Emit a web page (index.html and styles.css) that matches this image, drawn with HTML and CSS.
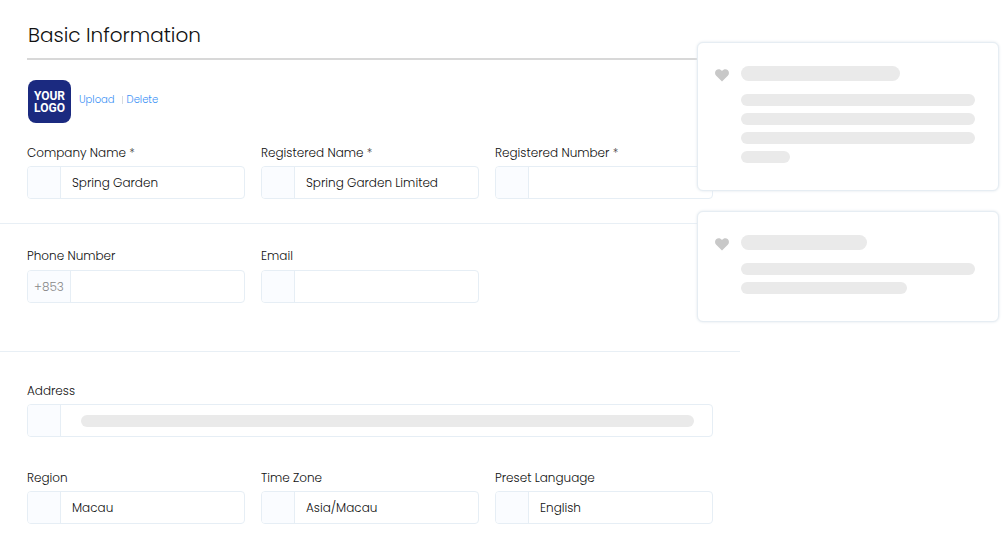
FILE: index.html
```html
<!DOCTYPE html>
<html lang="en">
<head>
    <meta charset="utf-8">
    <title>Basic Information</title>
    <link rel="stylesheet" href="styles.css">
</head>
<body>
<div class="page">
    <form class="main">
        <section class="section">
            <h1>Basic Information</h1>
            <div class="logo-row">
                <div class="logo"><span>YOUR</span><span>LOGO</span></div>
                <div class="logo-links">
                    <a href="#">Upload</a>
                    <span class="sep"></span>
                    <a href="#">Delete</a>
                </div>
            </div>
            <div class="fields">
                <div class="field">
                    <label for="company">Company Name <span class="req">*</span></label>
                    <div class="control"><span class="prefix"></span><input type="text" id="company" value="Spring Garden"></div>
                </div>
                <div class="field">
                    <label for="regname">Registered Name <span class="req">*</span></label>
                    <div class="control"><span class="prefix"></span><input type="text" id="regname" value="Spring Garden Limited"></div>
                </div>
                <div class="field">
                    <label for="regnumber">Registered Number <span class="req">*</span></label>
                    <div class="control"><span class="prefix"></span><input type="text" id="regnumber"></div>
                </div>
            </div>
        </section>
        <section class="section contact">
            <div class="fields">
                <div class="field">
                    <label for="phone">Phone Number</label>
                    <div class="control"><span class="prefix code">+853</span><input type="tel" id="phone"></div>
                </div>
                <div class="field">
                    <label for="email">Email</label>
                    <div class="control"><span class="prefix"></span><input type="email" id="email"></div>
                </div>
            </div>
        </section>
        <section class="section location">
            <div class="fields">
                <div class="field full">
                    <label for="address">Address</label>
                    <div class="control">
                        <span class="prefix"></span>
                        <input type="text" id="address">
                        <span class="bar address-bar"></span>
                    </div>
                </div>
                <div class="field">
                    <label for="region">Region</label>
                    <div class="control"><span class="prefix"></span><input type="text" id="region" value="Macau"></div>
                </div>
                <div class="field">
                    <label for="timezone">Time Zone</label>
                    <div class="control"><span class="prefix"></span><input type="text" id="timezone" value="Asia/Macau"></div>
                </div>
                <div class="field">
                    <label for="language">Preset Language</label>
                    <div class="control"><span class="prefix"></span><input type="text" id="language" value="English"></div>
                </div>
            </div>
        </section>
    </form>
    <aside class="cards">
        <div class="card">
            <svg class="heart" viewBox="0 0 14 13"><path d="M7 12.6 1.2 6.8C-.4 5.1-.3 2.6 1.1 1.3 2.7-.2 5.4-.1 7 2 8.6-.1 11.3-.2 12.9 1.3 14.3 2.6 14.4 5.1 12.8 6.8Z"/></svg>
            <div class="lines">
                <div class="bar title w68"></div>
                <div class="bar"></div>
                <div class="bar"></div>
                <div class="bar"></div>
                <div class="bar w21"></div>
            </div>
        </div>
        <div class="card">
            <svg class="heart" viewBox="0 0 14 13"><path d="M7 12.6 1.2 6.8C-.4 5.1-.3 2.6 1.1 1.3 2.7-.2 5.4-.1 7 2 8.6-.1 11.3-.2 12.9 1.3 14.3 2.6 14.4 5.1 12.8 6.8Z"/></svg>
            <div class="lines">
                <div class="bar title w54"></div>
                <div class="bar"></div>
                <div class="bar w71"></div>
            </div>
        </div>
    </aside>
</div>
</body>
</html>
```
FILE: styles.css
```css
* {
    box-sizing: border-box;
}

body {
    margin: 0;
    background: #fff;
    color: #111;
    font-family: Poppins, Inter, "Open Sans", sans-serif;
    font-size: 12px;
    font-weight: 300;
    line-height: 20px;
}

.page {
    position: relative;
}

.main {
    margin-right: 262px;
}

.section {
    padding: 0 27px 24px;
}

.section.contact {
    border-top: 1px solid #e8eff5;
    padding-top: 22px;
    padding-bottom: 48px;
}

.section.contact label {
    margin-bottom: 4px;
}

.section.location {
    border-top: 1px solid #e8eff5;
    padding-top: 29px;
}

h1 {
    margin: 0 0 20px;
    padding: 21px 0 9px 1px;
    border-bottom: 2px solid #d8d8d8;
    font-size: 20px;
    font-weight: 300;
    line-height: 28px;
}

.logo-row {
    display: flex;
    align-items: center;
    margin-bottom: 20px;
    padding-left: 1px;
}

.logo {
    display: flex;
    flex-direction: column;
    justify-content: center;
    width: 43px;
    height: 43px;
    margin-right: 8px;
    border-radius: 8px;
    background: #1b2a80;
    color: #fff;
    font-family: Roboto, sans-serif;
    font-size: 12px;
    font-weight: 700;
    line-height: 12px;
    text-align: center;
}

.logo-links {
    display: flex;
    align-items: center;
    padding-bottom: 4px;
    font-size: 10px;
}

.logo-row a {
    color: #3a90f5;
    text-decoration: none;
}

.sep {
    width: 1px;
    height: 8px;
    margin: 0 4px 0 7px;
    background: #d8dce0;
}

.fields {
    display: grid;
    grid-template-columns: repeat(3, minmax(0, 1fr));
    gap: 31px 16px;
}

.full {
    grid-column: 1 / -1;
}

label {
    display: block;
    margin-bottom: 3px;
}

.req {
    color: #444;
}

.control {
    position: relative;
    display: flex;
    height: 33px;
    border: 1px solid #e6eef5;
    border-radius: 4px;
    overflow: hidden;
}

.prefix {
    flex: none;
    width: 33px;
    border-right: 1px solid #e6eef5;
    background: #fafcff;
}

.prefix.code {
    width: 43px;
    color: #888;
    line-height: 31px;
    text-align: center;
}

input {
    flex: 1;
    min-width: 0;
    padding: 0 11px;
    border: 0;
    outline: 0;
    background: transparent;
    color: #111;
    font: inherit;
}

.bar {
    height: 12px;
    border-radius: 8px;
    background: #eaeaea;
}

/* placeholder drawn over the empty address input */
.address-bar {
    position: absolute;
    top: 10px;
    right: 18px;
    left: 53px;
}

.cards {
    position: absolute;
    top: 42px;
    right: 3px;
    width: 302px;
}

.card {
    display: flex;
    gap: 12px;
    margin-bottom: 20px;
    padding: 23px 23px 27px 17px;
    border: 1px solid #e6edf3;
    border-radius: 6px;
    background: #fff;
    box-shadow: 0 0 3px #dfe6ec;
}

.heart {
    flex: none;
    width: 14px;
    height: 13px;
    margin-top: 3px;
    fill: #c8c8c8;
}

.lines {
    display: flex;
    flex: 1;
    flex-direction: column;
    gap: 7px;
}

.title {
    height: 15px;
    margin-bottom: 6px;
}

.w68 {
    width: 68%;
}

.w21 {
    width: 21%;
}

.w54 {
    width: 54%;
}

.w71 {
    width: 71%;
}
```
